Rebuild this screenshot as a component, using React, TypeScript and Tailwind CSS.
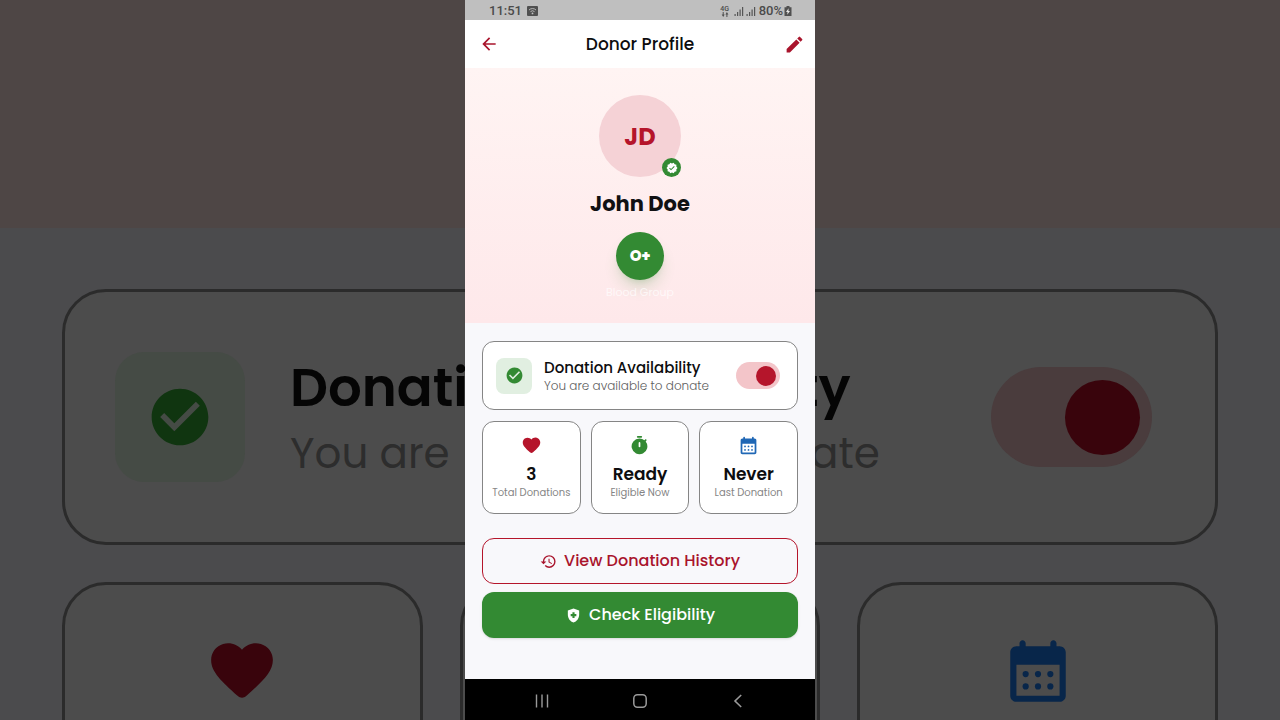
import React, { useState } from 'react';
import { MdArrowBack, MdCheckCircle, MdEdit, MdHealthAndSafety, MdHistory, MdVerified } from 'react-icons/md';

interface IconProps {
    className?: string;
}

interface Stat {
    value: string;
    label: string;
    icon: React.ReactNode;
}

const HeartIcon: React.FC<IconProps> = ({ className }) => (
    <svg viewBox="0 0 24 24" fill="currentColor" className={className} aria-hidden="true">
        <path d="M13.35 20.13c-.76.69-1.93.69-2.69-.01l-.11-.1C5.3 15.27 1.87 12.16 2 8.28c.06-1.7.93-3.33 2.34-4.29 2.64-1.8 5.9-.96 7.66 1.1 1.76-2.06 5.02-2.91 7.66-1.1 1.41.96 2.28 2.59 2.34 4.29.14 3.88-3.3 6.99-8.55 11.76l-.1.09z" />
    </svg>
);

const TimerIcon: React.FC<IconProps> = ({ className }) => (
    <svg viewBox="0 0 24 24" fill="currentColor" className={className} aria-hidden="true">
        <rect x="9" y="1" width="6" height="2" rx="1" />
        <path
            fillRule="evenodd"
            d="M19.03 7.39l.75-.75c.38-.38.39-1.01 0-1.4l-.01-.01c-.39-.39-1.01-.38-1.4 0l-.75.75A8.96 8.96 0 0 0 12 4a9 9 0 1 0 7.03 3.39zM13 13c0 .55-.45 1-1 1s-1-.45-1-1V9c0-.55.45-1 1-1s1 .45 1 1v4z"
        />
    </svg>
);

const CalendarIcon: React.FC<IconProps> = ({ className }) => (
    <svg viewBox="0 0 24 24" fill="currentColor" className={className} aria-hidden="true">
        <path
            fillRule="evenodd"
            d="M17 2c-.55 0-1 .45-1 1v1H8V3c0-.55-.45-1-1-1s-1 .45-1 1v1H5c-1.11 0-2 .9-2 2v14c0 1.1.89 2 2 2h14c1.1 0 2-.9 2-2V6c0-1.1-.9-2-2-2h-1V3c0-.55-.45-1-1-1zM19 20H5V10h14v10z"
        />
        <circle cx="8" cy="13" r="1" />
        <circle cx="12" cy="13" r="1" />
        <circle cx="16" cy="13" r="1" />
        <circle cx="8" cy="17" r="1" />
        <circle cx="12" cy="17" r="1" />
        <circle cx="16" cy="17" r="1" />
    </svg>
);

const WifiBoxIcon: React.FC = () => (
    <svg viewBox="0 0 11 10" className="h-[10px] w-[11px]" aria-hidden="true">
        <rect width="11" height="10" rx="1" fill="#505050" />
        <g fill="none" stroke="#c4c4c4" strokeWidth="0.9">
            <path d="M2 4a5 5 0 0 1 7 0" />
            <path d="M3.5 5.6a3 3 0 0 1 4 0" />
        </g>
        <circle cx="5.5" cy="7.4" r="0.9" fill="#c4c4c4" />
    </svg>
);

const SignalIcon: React.FC = () => (
    <svg viewBox="0 0 10 10" className="h-[10px] w-[10px]" fill="#555555" aria-hidden="true">
        <rect x="0.5" y="8" width="1.2" height="2" />
        <rect x="3" y="6" width="1.2" height="4" />
        <rect x="5.5" y="3.5" width="1.2" height="6.5" />
        <rect x="8" y="1" width="1.2" height="9" />
    </svg>
);

const NetworkIcon: React.FC = () => (
    <span className="flex w-2 flex-col items-center">
        <span className="text-[7px] leading-[6px] font-medium">4G</span>
        <svg viewBox="0 0 8 5" className="h-[5px] w-2" fill="#505050" aria-hidden="true">
            <path d="M1.7 0h1v2.6h1L2.2 5 .7 2.6h1zM5.4 5h1V2.4h1L5.9 0 4.4 2.4h1z" />
        </svg>
    </span>
);

const BatteryIcon: React.FC = () => (
    <svg viewBox="0 0 8 10" className="h-[10px] w-2" aria-hidden="true">
        <path d="M2.5 0h3v1.2H7.5V10H.5V1.2h2z" fill="#505050" />
        <path d="M4.6 2.2 2 6h1.6l-.4 2.8L6 4.9H4.4z" fill="#e8e8e8" />
    </svg>
);

const StatusBar: React.FC = () => (
    <div className="flex h-5 items-center justify-between bg-[#bfbfbf] pt-[2px] pr-[23px] pl-6 font-[Roboto,sans-serif] text-[13px] font-medium text-[#4b4b4b]">
        <div className="flex items-center gap-[5px]">
            <span>11:51</span>
            <WifiBoxIcon />
        </div>
        <div className="flex items-center gap-[3px]">
            <NetworkIcon />
            <span className="flex gap-[2px] pl-[2px]">
                <SignalIcon />
                <SignalIcon />
            </span>
            <span className="flex items-center gap-px">
                80%
                <BatteryIcon />
            </span>
        </div>
    </div>
);

const stats: Stat[] = [
    { value: '3', label: 'Total Donations', icon: <HeartIcon className="size-[21px] text-[#b5152b]" /> },
    { value: 'Ready', label: 'Eligible Now', icon: <TimerIcon className="size-[21px] text-[#338a33]" /> },
    { value: 'Never', label: 'Last Donation', icon: <CalendarIcon className="size-[21px] text-[#1f67b5]" /> },
];

// Enlarged, dimmed cards that fill the window on both sides of the phone
const Backdrop: React.FC = () => (
    <div className="absolute inset-0 overflow-hidden bg-[#4b4b4d]" aria-hidden="true">
        <div className="h-[228px] bg-[#4e4645]" />
        <div className="flex flex-col gap-[37px] px-[62px] pt-[61px]">
            <div className="flex h-[256px] items-center rounded-[44px] border-3 border-[#2b2b2b] bg-[#4c4c4c] pr-[63px] pl-[50px]">
                <div className="flex size-[130px] items-center justify-center rounded-[29px] bg-[#454b45]">
                    <MdCheckCircle className="size-[68px] text-[#103510]" />
                </div>
                <div className="flex flex-1 justify-between pt-2 pl-[45px] whitespace-nowrap">
                    <div>
                        <div className="text-[53px] leading-[66px] font-semibold text-[#050505]">Donati</div>
                        <div className="text-[42px] leading-[66px] text-[#2d2d2d]">You are</div>
                    </div>
                    <div className="w-[193px]">
                        <div className="text-[53px] leading-[66px] font-semibold text-[#050505]">ty</div>
                        <div className="pl-3 text-[42px] leading-[66px] text-[#2d2d2d]">ate</div>
                    </div>
                </div>
                <div className="flex h-[100px] w-[161px] items-center justify-end rounded-full bg-[#4a3c3d] pr-3">
                    <div className="size-[75px] rounded-full bg-[#39040c]" />
                </div>
            </div>
            <div className="grid grid-cols-3 gap-[37px]">
                <div className="flex h-[340px] justify-center rounded-[44px] border-3 border-[#2b2b2b] bg-[#4c4c4c] pt-[49px]">
                    <HeartIcon className="size-[74px] text-[#39040c]" />
                </div>
                <div className="flex h-[340px] justify-center rounded-[44px] border-3 border-[#2b2b2b] bg-[#4c4c4c] pt-[49px]">
                    <TimerIcon className="size-[74px] text-[#103510]" />
                </div>
                <div className="flex h-[340px] justify-center rounded-[44px] border-3 border-[#2b2b2b] bg-[#4c4c4c] pt-[49px]">
                    <CalendarIcon className="size-[74px] text-[#08264a]" />
                </div>
            </div>
        </div>
    </div>
);

const App: React.FC = () => {
    const [available, setAvailable] = useState<boolean>(true);

    return (
        <div className="relative flex min-h-screen justify-center font-[Poppins,Inter,sans-serif]">
            <Backdrop />
            <div className="relative flex w-full max-w-[350px] flex-col bg-[#f8f8fb]">
                <StatusBar />
                <header className="flex h-12 items-center bg-white pr-[7px] pl-[10px] text-[#a9142c]">
                    <button type="button" aria-label="Back" className="flex size-7 items-center justify-center">
                        <MdArrowBack className="size-5" />
                    </button>
                    <h1 className="flex-1 pt-px pr-[3px] text-center text-[17px] font-medium text-[#0d0d0f]">Donor Profile</h1>
                    <button type="button" aria-label="Edit profile" className="flex size-7 items-center justify-center">
                        <MdEdit className="size-[21px]" />
                    </button>
                </header>

                <section className="flex flex-col items-center bg-linear-to-b from-[#fff4f3] to-[#fee8ea] pt-[27px] pb-[23px]">
                    <div className="relative flex size-[82px] items-center justify-center rounded-full bg-[#f5d2d6] pt-px text-[24px] font-bold text-[#b5152b]">
                        JD
                        <span className="absolute right-0 bottom-0 flex size-[19px] items-center justify-center rounded-full bg-[#338a33] text-white">
                            <MdVerified className="size-3" />
                        </span>
                    </div>
                    <h2 className="mt-[11px] text-[21px] leading-8 font-bold text-[#111113]">John Doe</h2>
                    <div className="mt-3 flex size-12 items-center justify-center rounded-full bg-[#338a33] text-[15px] font-extrabold text-white shadow-lg shadow-[#338a33]/20">
                        O+
                    </div>
                    <p className="mt-1 text-[11px] leading-4 text-white/70">Blood Group</p>
                </section>

                <main className="flex flex-1 flex-col px-[17px] pt-[18px] pb-10">
                    <div className="flex h-[69px] items-center rounded-xl border border-[#858585] bg-white pr-[17px] pl-[13px]">
                        <div className="flex size-9 items-center justify-center rounded-lg bg-[#e1efe1]">
                            <MdCheckCircle className="size-[19px] text-[#338a33]" />
                        </div>
                        <div className="flex-1 pt-[3px] pl-3 whitespace-nowrap">
                            <label htmlFor="availability" className="block text-[15px] leading-[18px] font-medium text-[#0d0d0f]">
                                Donation Availability
                            </label>
                            <p className="text-[12px] leading-[18px] font-light text-[#606060]">You are available to donate</p>
                        </div>
                        <input
                            id="availability"
                            type="checkbox"
                            checked={available}
                            onChange={(e) => setAvailable(e.target.checked)}
                            className="flex h-[27px] w-11 appearance-none items-center rounded-full bg-[#d6d6d6] px-1 before:size-5 before:rounded-full before:bg-[#777777] checked:justify-end checked:bg-[#f3c5c9] checked:before:bg-[#b5152b]"
                        />
                    </div>

                    <div className="mt-[11px] grid grid-cols-3 gap-[10px]">
                        {stats.map((stat) => (
                            <div
                                key={stat.label}
                                className="flex h-[93px] flex-col items-center rounded-xl border border-[#858585] bg-white pt-[13px]"
                            >
                                {stat.icon}
                                <span className="mt-[6px] text-[17px] leading-6 font-semibold text-[#0d0d0f]">{stat.value}</span>
                                <span className="text-[10px] leading-[14px] whitespace-nowrap text-[#858585]">{stat.label}</span>
                            </div>
                        ))}
                    </div>

                    <button
                        type="button"
                        className="mt-6 flex h-[46px] items-center justify-center gap-[7px] rounded-xl border border-[#b5152b] text-[16px] font-medium text-[#a9142c]"
                    >
                        <MdHistory className="size-[17px]" />
                        View Donation History
                    </button>
                    <button
                        type="button"
                        className="mt-2 flex h-[46px] items-center justify-center gap-[7px] rounded-xl bg-[#338a33] text-[16px] font-medium text-white shadow-sm"
                    >
                        <MdHealthAndSafety className="size-[17px]" />
                        Check Eligibility
                    </button>
                </main>

                <nav className="flex h-[41px] items-center justify-around bg-black px-7 pt-[2px] text-[#9a9a9a]">
                    <button type="button" aria-label="Recent apps">
                        <svg viewBox="0 0 14 14" className="size-[14px]" stroke="currentColor" strokeWidth="1.4">
                            <path d="M1.5 0.5v13M7 0.5v13M12.5 0.5v13" />
                        </svg>
                    </button>
                    <button type="button" aria-label="Home">
                        <svg viewBox="0 0 14 14" className="size-[14px]" fill="none" stroke="currentColor" strokeWidth="1.5">
                            <rect x="0.8" y="0.8" width="12.4" height="12.4" rx="3.6" />
                        </svg>
                    </button>
                    <button type="button" aria-label="Back to previous screen">
                        <svg viewBox="0 0 14 14" className="size-[14px]" fill="none" stroke="currentColor" strokeWidth="1.6">
                            <path d="M10.2 1 4 7l6.2 6" />
                        </svg>
                    </button>
                </nav>
            </div>
        </div>
    );
};

export default App;
